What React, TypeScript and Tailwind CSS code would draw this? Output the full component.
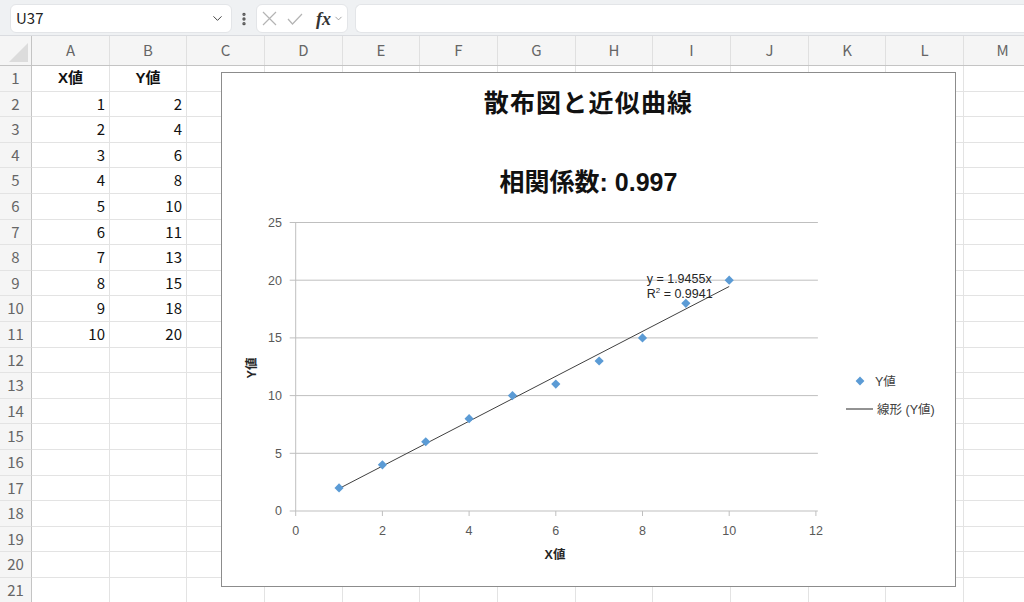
import React from 'react';
import { ChevronDown, EllipsisVertical } from 'lucide-react';

const COLS = ['A', 'B', 'C', 'D', 'E', 'F', 'G', 'H', 'I', 'J', 'K', 'L', 'M'];
// column widths snap to the reference gridlines (about 77.7px each)
const COL_W = [
  'w-[78px]', 'w-[77px]', 'w-[78px]', 'w-[78px]', 'w-[77px]', 'w-[78px]', 'w-[78px]',
  'w-[77px]', 'w-[78px]', 'w-[78px]', 'w-[77px]', 'w-[78px]', 'w-[78px]',
];
const ROW_H = ['h-[26px]', 'h-[25px]', 'h-[26px]', 'h-[25px]', 'h-[26px]'];

const DATA: [number, number][] = [
  [1, 2], [2, 4], [3, 6], [4, 8], [5, 10], [6, 11], [7, 13], [8, 15], [9, 18], [10, 20],
];

const cellFont = { fontFamily: '"Noto Sans CJK JP", "Noto Sans", sans-serif' };
const chartFont = '"Liberation Sans", "Noto Sans CJK JP", sans-serif';

function Toolbar() {
  return (
    <div className="h-[36px] bg-[#eff1f3] border-b border-[#dadce0] flex items-start pt-[4px] pl-[10px]">
      <div className="w-[222px] h-[29px] bg-white rounded-[6px] border border-[#e3e5e8] flex items-center justify-between pl-[5px] pr-[6px]">
        <span className="text-[15px] text-[#222]" style={cellFont}>U37</span>
        <ChevronDown size={15} strokeWidth={1.6} className="text-[#444]" />
      </div>
      <div className="w-[24px] h-[29px] flex items-center justify-center">
        <EllipsisVertical size={16} strokeWidth={3} className="text-[#555]" />
      </div>
      <div className="w-[92px] h-[29px] bg-white rounded-[6px] border border-[#e3e5e8] flex items-center pl-[5px] gap-[10px]">
        {/* cancel */}
        <svg width="15" height="15" viewBox="0 0 15 15" className="text-[#b4b4b4]">
          <path d="M1 1L14 14M14 1L1 14" stroke="currentColor" strokeWidth="1.2" fill="none" />
        </svg>
        {/* enter */}
        <svg width="16" height="12" viewBox="0 0 16 12" className="text-[#b4b4b4]">
          <path d="M1 6L5.5 11L15 1" stroke="currentColor" strokeWidth="1.2" fill="none" />
        </svg>
        <span className="flex items-center ml-[3px]">
          <span className="text-[18px] italic font-bold text-[#333] leading-none" style={{ fontFamily: '"Liberation Serif", serif' }}>fx</span>
          <ChevronDown size={11} strokeWidth={1.5} className="text-[#777] ml-[2px]" />
        </span>
      </div>
      <div className="ml-[7px] flex-1 h-[29px] bg-white rounded-l-[6px] border border-r-0 border-[#e3e5e8]" />
    </div>
  );
}

function HeaderRow() {
  return (
    <div className="flex h-[30px] bg-[#f5f5f5] border-b border-[#c4c4c4]">
      <div className="w-[32px] shrink-0 border-r border-[#c4c4c4] relative">
        <div className="absolute right-[3px] bottom-[3px] w-0 h-0 border-l-[19px] border-l-transparent border-b-[19px] border-b-[#dcdcdc]" />
      </div>
      {COLS.map((c, i) => (
        <div
          key={c}
          className={`${COL_W[i]} shrink-0 border-r border-[#e0e0e0] flex items-center justify-center text-[15px] text-[#666]`}
          style={cellFont}
        >
          {c}
        </div>
      ))}
    </div>
  );
}

function cellValue(row: number, col: number): { text: string; bold?: boolean } | null {
  if (row === 1 && col === 0) return { text: 'X値', bold: true };
  if (row === 1 && col === 1) return { text: 'Y値', bold: true };
  if (row >= 2 && row <= 11 && col <= 1) return { text: String(DATA[row - 2][col]) };
  return null;
}

function Sheet() {
  const rows = Array.from({ length: 21 }, (_, i) => i + 1);
  return (
    <div>
      {rows.map((r, ri) => (
        <div key={r} className={`flex ${ROW_H[ri % 5]}`}>
          <div
            className="w-[32px] shrink-0 bg-[#f5f5f5] border-r border-b border-r-[#c4c4c4] border-b-[#e3e3e3] flex items-center justify-center text-[15px] text-[#666]"
            style={cellFont}
          >
            {r}
          </div>
          {COLS.map((c, ci) => {
            const v = cellValue(r, ci);
            return (
              <div
                key={c}
                className={`${COL_W[ci]} shrink-0 border-r border-b border-[#e3e3e3] flex items-center text-[15px] text-[#111] ${
                  v?.bold ? 'justify-center font-bold' : 'justify-end pr-[4px]'
                }`}
                style={v?.bold ? { fontFamily: chartFont } : cellFont}
              >
                {v?.text}
              </div>
            );
          })}
        </div>
      ))}
    </div>
  );
}

// chart coordinates (svg space, origin at chart inner top-left)
const px = (v: number) => 73.7 + v * 43.35;
const py = (v: number) => 438 - v * 11.54;

function Diamond({ x, y, r = 4.6 }: { x: number; y: number; r?: number }) {
  return <polygon points={`${x},${y - r} ${x + r},${y} ${x},${y + r} ${x - r},${y}`} fill="#5b9bd5" />;
}

function Chart() {
  const yTicks = [0, 5, 10, 15, 20, 25];
  const xTicks = [0, 2, 4, 6, 8, 10, 12];
  return (
    <div className="absolute left-[221px] top-[72px] w-[735px] h-[515px] bg-white border border-[#8c8c8c]">
      <svg width="733" height="513" viewBox="0 0 733 513" style={{ fontFamily: chartFont }}>
        <text x="366.5" y="39" textAnchor="middle" fontSize="25" fontWeight="bold" fill="#111" letterSpacing="1.2">
          散布図と近似曲線
        </text>
        <text x="366.5" y="118" textAnchor="middle" fontSize="25" fontWeight="bold" fill="#111">
          相関係数: 0.997
        </text>

        {/* gridlines */}
        {yTicks.map((t) => (
          <g key={t}>
            <line x1={px(0) - 6} x2={px(12) + 2} y1={py(t)} y2={py(t)} stroke="#bfbfbf" strokeWidth="1" />
            <text x="60" y={py(t) + 4.3} textAnchor="end" fontSize="12.5" fill="#595959">
              {t}
            </text>
          </g>
        ))}
        <line x1={px(0)} x2={px(0)} y1={py(25)} y2={py(0)} stroke="#bfbfbf" strokeWidth="1" />
        {xTicks.map((t) => (
          <g key={t}>
            <line x1={px(t)} x2={px(t)} y1={py(0)} y2={py(0) + 5} stroke="#bfbfbf" strokeWidth="1" />
            <text x={px(t)} y="462" textAnchor="middle" fontSize="12.5" fill="#595959">
              {t}
            </text>
          </g>
        ))}

        {/* trendline */}
        <line x1={px(1)} y1={py(1.9455)} x2={px(10)} y2={py(19.455)} stroke="#404040" strokeWidth="1" />

        {DATA.map(([x, y]) => (
          <Diamond key={x} x={px(x)} y={py(y)} />
        ))}

        <text x="424.7" y="210" fontSize="12.5" fill="#262626">y = 1.9455x</text>
        <text x="424.7" y="225" fontSize="12.5" fill="#262626">
          R<tspan fontSize="8" dy="-5">2</tspan>
          <tspan dy="5"> = 0.9941</tspan>
        </text>

        <text x="333" y="486" textAnchor="middle" fontSize="12.5" fontWeight="bold" fill="#262626">X値</text>
        <text
          x="0"
          y="0"
          transform="translate(34 295) rotate(-90)"
          textAnchor="middle"
          fontSize="12.5"
          fontWeight="bold"
          fill="#262626"
        >
          Y値
        </text>

        {/* legend */}
        <Diamond x={638} y={308} r={4.4} />
        <text x="653" y="313" fontSize="12.5" fill="#404040">Y値</text>
        <line x1="624" x2="651" y1="336" y2="336" stroke="#262626" strokeWidth="1" />
        <text x="655" y="341" fontSize="12.5" fill="#404040">線形 (Y値)</text>
      </svg>
    </div>
  );
}

export default function App() {
  return (
    <div className="w-[1024px] h-[602px] overflow-hidden bg-white relative">
      <Toolbar />
      <HeaderRow />
      <Sheet />
      <Chart />
    </div>
  );
}
